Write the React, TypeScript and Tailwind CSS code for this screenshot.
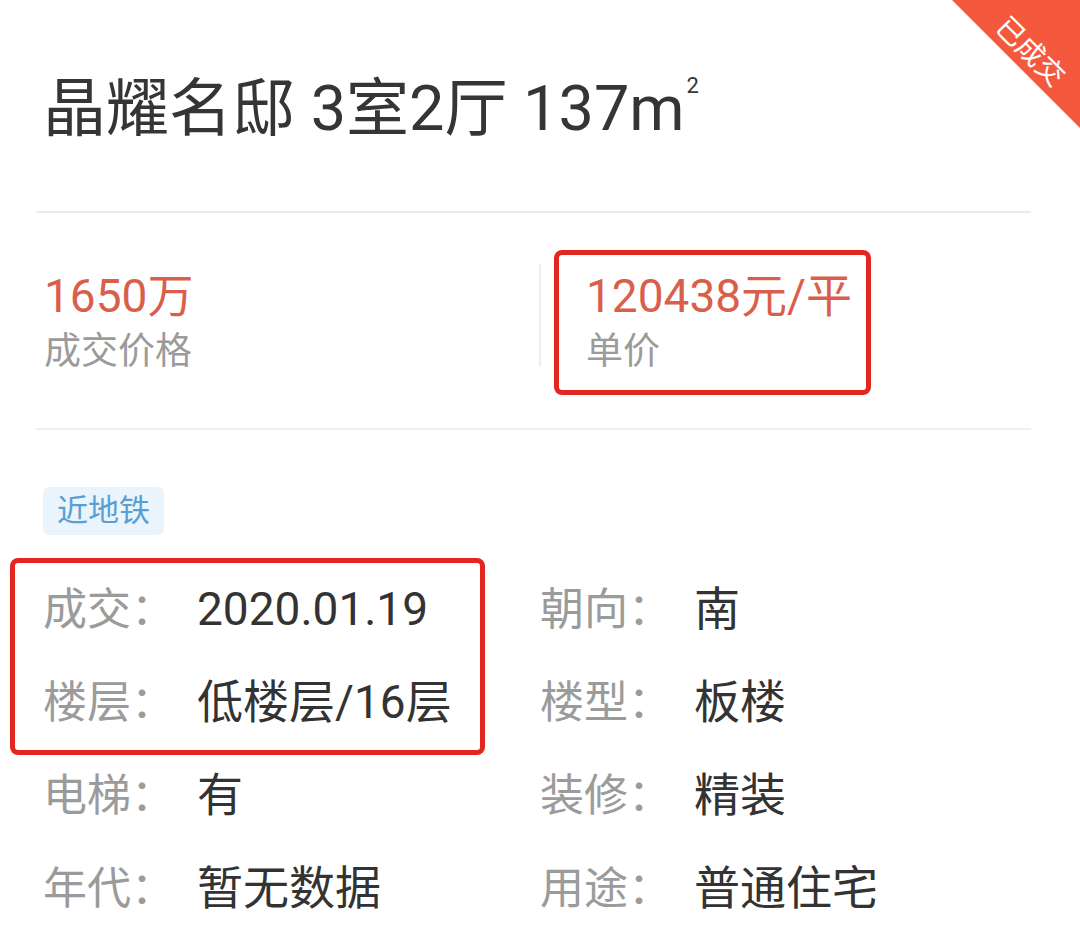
const FONT = '"Roboto", "Noto Sans CJK SC", sans-serif';

const leftRows = [
  { label: '成交', value: '2020.01.19' },
  { label: '楼层', value: '低楼层/16层' },
  { label: '电梯', value: '有' },
  { label: '年代', value: '暂无数据' },
];

const rightRows = [
  { label: '朝向', value: '南' },
  { label: '楼型', value: '板楼' },
  { label: '装修', value: '精装' },
  { label: '用途', value: '普通住宅' },
];

function InfoRow({ label, value }: { label: string; value: string }) {
  return (
    <div className="flex h-[93px] items-center">
      <span className="w-[154px] text-[44px] text-[#9b9b9b]">{label}：</span>
      <span className="text-[46px] text-[#333333]">{value}</span>
    </div>
  );
}

function Highlight({ className }: { className: string }) {
  return (
    <div
      className={`pointer-events-none absolute rounded-[8px] border-[5px] border-[#e3261f] ${className}`}
    />
  );
}

export default function App() {
  return (
    <div
      className="relative h-[952px] w-[1080px] overflow-hidden bg-white"
      style={{ fontFamily: FONT }}
    >
      {/* corner ribbon */}
      <div className="absolute right-0 top-0 h-[128px] w-[128px] bg-[#f4593e] [clip-path:polygon(0_0,100%_0,100%_100%)]">
        <span className="absolute left-[78px] top-[52px] -translate-x-1/2 -translate-y-1/2 rotate-45 whitespace-nowrap text-[28px] leading-none text-white">
          已成交
        </span>
      </div>

      <div className="pl-[36px] pr-[49px]">
        <h1 className="flex items-start pl-[7px] pt-[69px] text-[63px] font-normal leading-[80px] text-[#353535]">
          <span className="whitespace-pre">晶耀名邸 3室2厅 137m</span>
          <span className="ml-[2px] mt-[6px] text-[22px] leading-none">2</span>
        </h1>

        <div className="mt-[62px] h-[2px] bg-[#ebebeb]" />

        <div className="flex pt-[55px]">
          <div className="w-[503px] pl-[8px]">
            <div className="text-[46px] leading-[56px] text-[#d95f4c]">1650万</div>
            <div className="mt-[3px] text-[37px] leading-[50px] text-[#9b9b9b]">成交价格</div>
          </div>
          <div className="-mt-[4px] h-[103px] w-[2px] bg-[#eeeeee]" />
          <div className="relative pl-[45px]">
            <div className="text-[46px] leading-[56px] text-[#d95f4c]">120438元/平</div>
            <div className="mt-[3px] text-[37px] leading-[50px] text-[#9b9b9b]">单价</div>
            <Highlight className="left-[13px] -top-[18px] h-[145px] w-[317px]" />
          </div>
        </div>

        <div className="mt-[51px] h-[2px] bg-[#efefef]" />

        <div className="pl-[7px]">
          <div className="mt-[57px] inline-flex h-[48px] items-center rounded-[6px] bg-[#e9f4fc] px-[14px] text-[31px] text-[#5b9fd2]">
            近地铁
          </div>

          <div className="mt-[28px] flex">
            <div className="w-[497px]">
              <div className="relative">
                <InfoRow {...leftRows[0]} />
                <InfoRow {...leftRows[1]} />
                <Highlight className="-left-[33px] -top-[5px] h-[197px] w-[475px]" />
              </div>
              <InfoRow {...leftRows[2]} />
              <InfoRow {...leftRows[3]} />
            </div>
            <div>
              {rightRows.map((r) => (
                <InfoRow key={r.label} {...r} />
              ))}
            </div>
          </div>
        </div>
      </div>
    </div>
  );
}
